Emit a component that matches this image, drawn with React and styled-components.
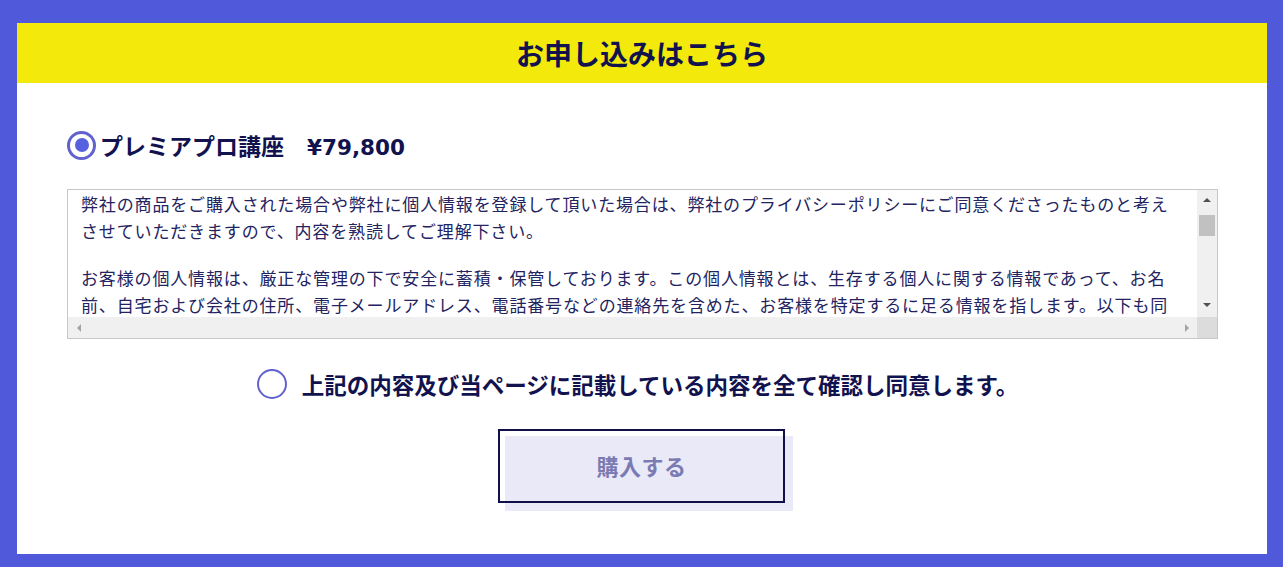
import React from 'react'
import styled, { createGlobalStyle } from 'styled-components'

const GlobalStyle = createGlobalStyle`
    html, body {
        margin: 0;
        padding: 0;
    }
    body {
        background: #5059d9;
        font-family: "DejaVu Sans", "Noto Sans CJK JP", sans-serif;
        color: #12124f;
    }
`

const Page = styled.div`
    width: 1283px;
    height: 567px;
    box-sizing: border-box;
    padding: 23px 16px 13px 17px;
    overflow: hidden;
`

const Card = styled.section`
    background: #fff;
    height: 531px;
    display: flex;
    flex-direction: column;
`

const Header = styled.h2`
    margin: 0;
    height: 60px;
    background: #f3ea0b;
    display: flex;
    align-items: center;
    justify-content: center;
    font-size: 28px;
    font-weight: 700;
    color: #12124f;
`

const Body = styled.div`
    padding: 45px 49px 0 50px;
    display: flex;
    flex-direction: column;
`

const Option = styled.label`
    display: flex;
    align-items: center;
    gap: ${p => p.$gap || 5}px;
    font-size: ${p => p.$size || 22}px;
    font-weight: 700;
    color: #12124f;
    cursor: pointer;
`

const Price = styled.span`
    font-size: 21.5px;
`

const Radio = styled.span`
    width: ${p => p.$size}px;
    height: ${p => p.$size}px;
    box-sizing: border-box;
    border-radius: 50%;
    border: ${p => p.$stroke}px solid #6262cf;
    display: flex;
    align-items: center;
    justify-content: center;
    flex-shrink: 0;
    &::after {
        content: '';
        display: ${p => (p.$checked ? 'block' : 'none')};
        width: 14px;
        height: 14px;
        border-radius: 50%;
        background: #5561de;
    }
`

const Policy = styled.div`
    margin-top: 27px;
    height: 150px;
    box-sizing: border-box;
    border: 1px solid #c8c8c8;
    display: grid;
    grid-template-columns: 1fr 20px;
    grid-template-rows: 1fr 21px;
`

const PolicyText = styled.div`
    overflow: hidden;
    padding: 0 17px 0 13px;
    font-size: 17px;
    letter-spacing: 0.85px;
    line-height: 27px;
    color: #23235f;
    font-weight: 400;
`

const Para = styled.p`
    margin: 0 0 20px;
    &:first-child {
        margin-top: 2px;
    }
`

const VBar = styled.div`
    background: #f0f0f0;
    display: flex;
    flex-direction: column;
    align-items: center;
`

const HBar = styled.div`
    background: #f0f0f0;
    display: flex;
    align-items: center;
    justify-content: space-between;
    padding: 0 8px 0 9px;
`

const Corner = styled.div`
    background: #dcdcdc;
`

const Arrow = styled.span`
    display: flex;
    align-items: center;
    justify-content: center;
    height: ${p => p.$h || 20}px;
`

const Track = styled.div`
    flex: 1;
    width: 100%;
    padding: 5px 2px 0 2px;
    box-sizing: border-box;
`

const Thumb = styled.div`
    height: 21px;
    background: #c1c1c1;
`

const Agree = styled.div`
    margin-top: 29px;
    display: flex;
    justify-content: center;
    padding-right: 10px;
`

const Actions = styled.div`
    position: relative;
    z-index: 0;
    margin-top: 29px;
    display: flex;
    justify-content: center;
    padding-right: 2px;
`

const BuyButton = styled.button`
    position: relative;
    width: 287px;
    height: 74px;
    padding-bottom: 3px;
    border: 2px solid #0f0f4a;
    background: transparent;
    font-family: inherit;
    font-size: 22px;
    font-weight: 700;
    color: #7b7bb3;
    letter-spacing: 0.5px;
    cursor: pointer;
    &::before {
        content: '';
        position: absolute;
        z-index: -1;
        top: 5px;
        left: 5px;
        width: 288px;
        height: 75px;
        background: #e9e9f7;
    }
`

const Tri = ({ dir, color }) => {
    const pts = {
        up: '4,0 8,4 0,4',
        down: '0,0 8,0 4,4',
        left: '4,0 4,8 0,4',
        right: '0,0 4,4 0,8',
    }[dir]
    const vertical = dir === 'up' || dir === 'down'
    return (
        <svg width={vertical ? 8 : 4} height={vertical ? 4 : 8}>
            <polygon points={pts} fill={color} />
        </svg>
    )
}

const paragraphs = [
    '弊社の商品をご購入された場合や弊社に個人情報を登録して頂いた場合は、弊社のプライバシーポリシーにご同意くださったものと考えさせていただきますので、内容を熟読してご理解下さい。',
    'お客様の個人情報は、厳正な管理の下で安全に蓄積・保管しております。この個人情報とは、生存する個人に関する情報であって、お名前、自宅および会社の住所、電子メールアドレス、電話番号などの連絡先を含めた、お客様を特定するに足る情報を指します。以下も同様です。',
    '弊社は、お客様の個人情報を、商品の発送、サービスの提供、お問い合わせへの回答、および弊社からのお知らせのために利用いたします。',
    '弊社は、法令に基づく場合を除き、お客様の同意なく個人情報を第三者に開示・提供することはありません。',
]

const App = () => {
    return (
        <>
            <GlobalStyle />
            <Page>
                <Card>
                    <Header>お申し込みはこちら</Header>
                    <Body>
                        <Option $size={23} $gap={4}>
                            <Radio $size={29} $stroke={3} $checked />
                            <span>プレミアプロ講座　<Price>¥79,800</Price></span>
                        </Option>
                        <Policy>
                            <PolicyText>
                                {paragraphs.map((t, i) => (
                                    <Para key={i}>{t}</Para>
                                ))}
                            </PolicyText>
                            <VBar>
                                <Arrow $h={20}><Tri dir="up" color="#505050" /></Arrow>
                                <Track><Thumb /></Track>
                                <Arrow $h={24}><Tri dir="down" color="#505050" /></Arrow>
                            </VBar>
                            <HBar>
                                <Tri dir="left" color="#a3a3a3" />
                                <Tri dir="right" color="#a3a3a3" />
                            </HBar>
                            <Corner />
                        </Policy>
                        <Agree>
                            <Option $size={22.5} $gap={15}>
                                <Radio $size={30} $stroke={2} />
                                上記の内容及び当ページに記載している内容を全て確認し同意します。
                            </Option>
                        </Agree>
                        <Actions>
                            <BuyButton>購入する</BuyButton>
                        </Actions>
                    </Body>
                </Card>
            </Page>
        </>
    )
}

export default App
